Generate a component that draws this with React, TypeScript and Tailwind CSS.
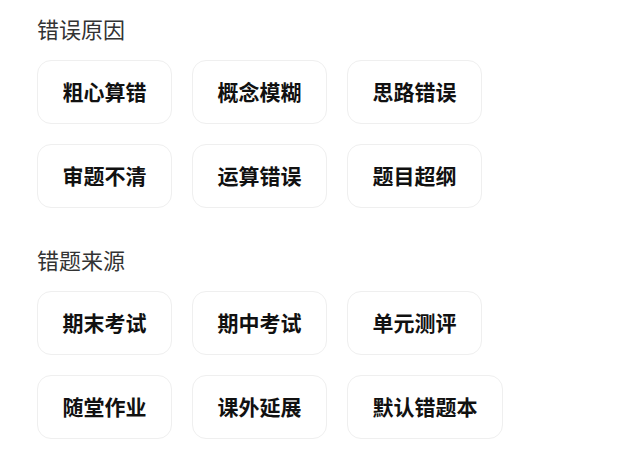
const sections = [
  { title: "错误原因", tags: ["粗心算错", "概念模糊", "思路错误", "审题不清", "运算错误", "题目超纲"] },
  { title: "错题来源", tags: ["期末考试", "期中考试", "单元测评", "随堂作业", "课外延展", "默认错题本"] },
]

function Tag({ label }: { label: string }) {
  return (
    <div className="h-[64px] px-[24.5px] flex items-center justify-center rounded-[14px] border border-[#efefef] bg-white text-[21px] font-bold text-[#111]">
      {label}
    </div>
  )
}

export default function App() {
  return (
    <div
      className="w-[628px] h-[461px] bg-white pl-[37px] pt-[12px] flex flex-col gap-[35px] overflow-hidden"
      style={{ fontFamily: '"Noto Sans CJK SC", "Noto Sans", sans-serif' }}
    >
      {sections.map((s) => (
        <div key={s.title} className="flex flex-col gap-[15px]">
          <div className="text-[22px] leading-[33px] text-[#333]">{s.title}</div>
          <div className="flex flex-wrap gap-[20px] w-[500px]">
            {s.tags.map((t) => (
              <Tag key={t} label={t} />
            ))}
          </div>
        </div>
      ))}
    </div>
  )
}
